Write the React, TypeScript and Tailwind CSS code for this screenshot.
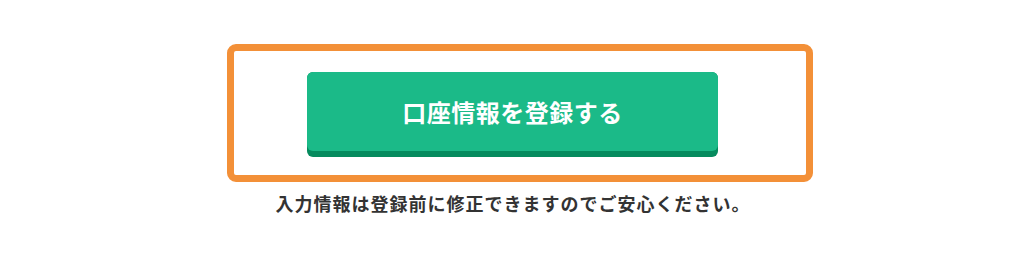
export default function App() {
  return (
    <div
      className="w-[1024px] h-[256px] bg-white flex flex-col items-center"
      style={{ fontFamily: '"Noto Sans CJK JP", "Noto Sans", sans-serif' }}
    >
      <div className="mt-[44px] ml-[16px] w-[586px] h-[138px] border-[7px] border-[#f39038] rounded-[9px] pl-[73px] pt-[21px]">
        <button className="w-[411px] h-[85px] rounded-[6px] bg-[#068b5e] pb-[6px]">
          <div className="h-full rounded-[6px] bg-[#1bba88] flex items-center justify-center text-white text-[24px] font-bold tracking-[0.5px]">
            口座情報を登録する
          </div>
        </button>
      </div>
      <p className="mt-[8px] ml-[2px] text-[18px] leading-[26px] font-bold text-[#333333] tracking-[1px]">
        入力情報は登録前に修正できますのでご安心ください。
      </p>
    </div>
  );
}
